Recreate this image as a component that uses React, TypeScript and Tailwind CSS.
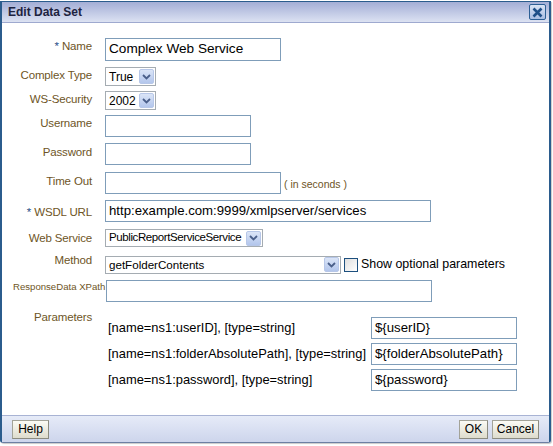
import type { ReactNode } from "react";

const LABEL = "text-[11.5px] tracking-[-0.15px] text-[#6e5526] text-right w-[92px] shrink-0 whitespace-nowrap pr-[2px]";

function Arrow() {
  return (
    <span className="ml-auto mr-[1px] flex h-[15px] w-[15px] items-center justify-center rounded-[2px] border border-[#b7c7e8] bg-gradient-to-b from-[#dbe5f7] to-[#b3c6ec]">
      <svg width="9" height="6" viewBox="0 0 9 6">
        <path d="M1 1 L4.5 4.5 L8 1" fill="none" stroke="#4a5f8a" strokeWidth="1.8" />
      </svg>
    </span>
  );
}

function Select({ value, w, h = "h-[19px]", txt = "" }: { value: string; w: string; h?: string; txt?: string }) {
  return (
    <div className={`${w} ${h} flex items-center border border-[#a5acb2] bg-white pl-[3px] text-[12px] text-black`}>
      <span className={`whitespace-nowrap ${txt}`}>{value}</span>
      <Arrow />
    </div>
  );
}

function Input({ value = "", w, h = "h-[22px]", size = "text-[13.2px]" }: { value?: string; w: string; h?: string; size?: string }) {
  return (
    <div className={`${w} ${h} ${size} flex items-center whitespace-nowrap border border-[#7f9db9] bg-white px-[3px] text-black`}>
      {value}
    </div>
  );
}

function Row({ label, mt, children, pt = "pt-0", req }: { label: string; mt: string; children: ReactNode; pt?: string; req?: boolean }) {
  return (
    <div className={`flex items-start ${mt}`}>
      <div className={`${LABEL} ${pt}`}>
        {req && <span className="text-[#2c4f8a]">* </span>}
        {label}
      </div>
      <div className="ml-[11px] flex items-center">{children}</div>
    </div>
  );
}

function Btn({ children, w }: { children: ReactNode; w: string }) {
  return (
    <div className={`${w} flex h-[19px] items-center justify-center border border-[#a3a398] border-b-[#8b8b80] border-r-[#8b8b80] bg-gradient-to-b from-[#fbfbf5] to-[#dedccd] text-[12px] text-black`}>
      {children}
    </div>
  );
}

const params = [
  ["[name=ns1:userID], [type=string]", "${userID}"],
  ["[name=ns1:folderAbsolutePath], [type=string]", "${folderAbsolutePath}"],
  ["[name=ns1:password], [type=string]", "${password}"],
];

export default function App() {
  return (
    <div className="h-[446px] w-[553px] bg-white pt-[1px] font-['Liberation_Sans',Arial,sans-serif]">
      <div className="flex h-[442px] w-[551px] flex-col rounded-b-[3px] border-x-2 border-t border-b border-[#2b5c8d] border-b-[#6d7fa3] shadow-[1px_1px_1px_#c9c9c9]">
        {/* title */}
        <div className="flex h-[21px] items-center border-b border-[#9ea9cf] bg-gradient-to-b from-[#a4aed6] to-[#dce2f2] pl-[6px] pr-[3px]">
          <span className="text-[12px] font-bold text-[#1d2340]">Edit Data Set</span>
          <div className="ml-auto flex h-[16px] w-[17px] items-center justify-center rounded-[2px] border border-[#2d5f95] bg-gradient-to-b from-[#d9e3f4] to-[#a9bde2]">
            <svg width="11" height="11" viewBox="0 0 11 11">
              <path d="M1.5 1.5 L9.5 9.5 M9.5 1.5 L1.5 9.5" stroke="#1f4f88" strokeWidth="2.6" />
            </svg>
          </div>
        </div>

        {/* body */}
        <div className="flex-1 bg-white pt-[15px]">
          <Row label="Name" req mt="mt-0" pt="pt-0">
            <Input w="w-[176px]" h="h-[23px]" size="text-[13.6px]" value="Complex Web Service" />
          </Row>
          <Row label="Complex Type" mt="mt-[6px]">
            <Select w="w-[51px]" value="True" />
          </Row>
          <Row label="WS-Security" mt="mt-[5px]">
            <Select w="w-[51px]" value="2002" />
          </Row>
          <Row label="Username" mt="mt-[5px]">
            <Input w="w-[146px]" />
          </Row>
          <Row label="Password" mt="mt-[6px]" pt="pt-[1px]">
            <Input w="w-[146px]" />
          </Row>
          <Row label="Time Out" mt="mt-[7px]" pt="pt-[1px]">
            <Input w="w-[176px]" />
            <span className="ml-[3px] mt-[3px] text-[10.5px] text-[#6e5526]">( in seconds )</span>
          </Row>
          <Row label="WSDL URL" req mt="mt-[6px]" pt="pt-[4px]">
            <Input w="w-[326px]" value="http:example.com:9999/xmlpserver/services" />
          </Row>
          <Row label="Web Service" mt="mt-[7px]" pt="pt-[1px]">
            <Select w="w-[158px]" h="h-[18px]" value="PublicReportServiceService" txt="text-[11.5px] tracking-[-0.4px]" />
          </Row>
          <div className="mt-[8px] flex items-start">
            <div className={`${LABEL} -mt-[3px]`}>Method</div>
            <div className="ml-[11px] flex items-center">
              <Select w="w-[236px]" h="h-[18px]" value="getFolderContents" txt="text-[11.6px]" />
              <span className="ml-[3px] h-[14px] w-[14px] border border-[#1c4f7e] bg-gradient-to-br from-[#dedede] to-white" />
              <span className="ml-[3px] text-[12.4px] text-black">Show optional parameters</span>
            </div>
          </div>
          <div className="mt-[6px] flex items-start">
            <div className="w-[103px] shrink-0 whitespace-nowrap pl-[11px] text-[9.6px] text-[#6e5526]">ResponseData XPath</div>
            <div className="ml-[1px]">
              <Input w="w-[326px]" />
            </div>
          </div>
          <div className="mt-[7px] flex items-start">
            <div className={LABEL}>Parameters</div>
            <div className="ml-[14px] mt-[8px] flex flex-col gap-[4px]">
              {params.map(([t, v]) => (
                <div key={t} className="flex items-center">
                  <span className="w-[263px] whitespace-nowrap text-[12.9px] text-black">{t}</span>
                  <Input w="w-[146px]" value={v} />
                </div>
              ))}
            </div>
          </div>
        </div>

        {/* footer */}
        <div className="flex h-[27px] items-center border-t border-[#a8b3d4] bg-gradient-to-b from-[#e6ebf8] to-[#cdd5ec] px-[10px]">
          <Btn w="w-[37px]">Help</Btn>
          <div className="ml-auto flex gap-[4px]">
            <Btn w="w-[29px]">OK</Btn>
            <Btn w="w-[47px]">Cancel</Btn>
          </div>
        </div>
      </div>
    </div>
  );
}
